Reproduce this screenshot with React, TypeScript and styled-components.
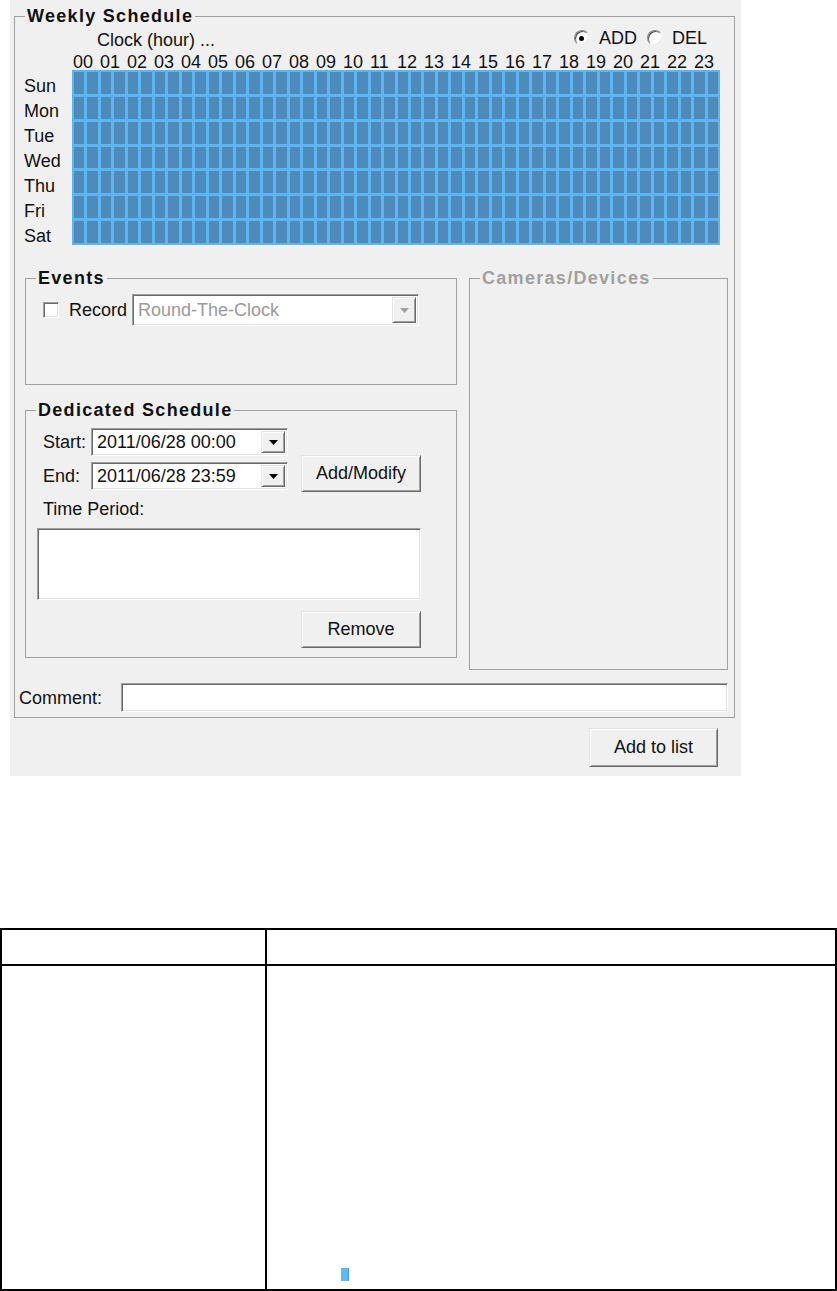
import React from 'react';
import styled, { createGlobalStyle } from 'styled-components';

const GlobalStyle = createGlobalStyle`
  html, body {
    margin: 0;
    padding: 0;
    background: #fff;
  }
  body {
    font-family: "Liberation Sans", Arial, sans-serif;
    color: #000;
  }
`;

const DAYS = ['Sun', 'Mon', 'Tue', 'Wed', 'Thu', 'Fri', 'Sat'];
const HOURS = Array.from({ length: 24 }, (_, i) => String(i).padStart(2, '0'));
const SLOTS = Array.from({ length: 7 * 48 }, (_, i) => i);

const Page = styled.div`
  width: 837px;
`;

const Panel = styled.div`
  width: 731px;
  margin-left: 10px;
  box-sizing: border-box;
  padding: 5px 0 9px;
  background: #f0f0f0;
  font-size: 18px;
  line-height: 20px;
  color: #111;
`;

const Group = styled.fieldset<{ $w: number; $h?: number; $ml?: number }>`
  box-sizing: border-box;
  min-width: 0;
  margin: 0 0 0 ${(p) => p.$ml ?? 0}px;
  padding: 0;
  width: ${(p) => p.$w}px;
  ${(p) => (p.$h ? `height: ${p.$h}px;` : '')}
  border: 1px solid #a0a0a0;
`;

const Legend = styled.legend<{ $disabled?: boolean }>`
  margin-left: 10px;
  padding: 0 2px;
  font-weight: bold;
  font-size: 18px;
  line-height: 22px;
  letter-spacing: 1.3px;
  color: ${(p) => (p.$disabled ? '#a0a0a0' : '#111')};
`;

const HeaderRow = styled.div`
  display: flex;
  justify-content: space-between;
  align-items: flex-start;
  box-sizing: border-box;
  height: 28px;
  padding: 1px 27px 0 82px;
`;

const ClockCaption = styled.span`
  margin-top: 2px;
`;

const RadioGroup = styled.div`
  display: flex;
  align-items: center;
  gap: 10px;
`;

const RadioOption = styled.label`
  display: flex;
  align-items: center;
  gap: 9px;
`;

const RadioCircle = styled.span`
  display: flex;
  align-items: center;
  justify-content: center;
  box-sizing: border-box;
  width: 16px;
  height: 16px;
  border-radius: 50%;
  background: #fff;
  border: 1px solid;
  border-color: #8a8a8a #f4f4f4 #f4f4f4 #8a8a8a;
  box-shadow: inset 1px 1px 0 #4a4a4a, inset -1px -1px 0 #e3e3e3;
`;

const RadioDot = styled.span`
  width: 5px;
  height: 5px;
  border-radius: 50%;
  background: #000;
`;

const ScheduleBody = styled.div`
  display: flex;
  align-items: flex-start;
  padding-left: 9px;
`;

const DayColumn = styled.div`
  width: 48px;
  padding-top: 19px;
  margin-bottom: -4px;
`;

const DayLabel = styled.div`
  height: 25px;
  line-height: 25px;
`;

const HourRow = styled.div`
  display: grid;
  grid-template-columns: repeat(24, 27px);
  height: 15px;
  line-height: 15px;
`;

const HourLabel = styled.span`
  padding-left: 1px;
`;

const Grid = styled.div`
  display: grid;
  grid-template-columns: repeat(48, 1fr);
  grid-template-rows: repeat(7, 1fr);
  gap: 3px;
  box-sizing: border-box;
  width: 648px;
  height: 175px;
  padding: 2px;
  background: #5cb6f4;
`;

const Slot = styled.span`
  background: #4e8aba;
`;

const LowerSection = styled.div`
  display: flex;
  gap: 12px;
  margin-top: 22px;
  padding-left: 10px;
`;

const LeftColumn = styled.div`
  display: flex;
  flex-direction: column;
  gap: 14px;
`;

const EventsRow = styled.div`
  display: flex;
  align-items: center;
  margin-top: 5px;
  padding-left: 17px;
`;

const Checkbox = styled.span`
  box-sizing: border-box;
  width: 16px;
  height: 16px;
  margin-right: 10px;
  background: #fff;
  border: 1px solid;
  border-color: #a0a0a0 #fff #fff #a0a0a0;
  box-shadow: inset 1px 1px 0 #696969, inset -1px -1px 0 #e3e3e3;
`;

const RecordLabel = styled.span`
  margin-right: 5px;
`;

const sunken = `
  box-sizing: border-box;
  background: #fff;
  border: 1px solid;
  border-color: #a0a0a0 #fff #fff #a0a0a0;
  box-shadow: inset 1px 1px 0 #696969, inset -1px -1px 0 #e3e3e3;
`;

const ComboBox = styled.div<{ $w: number; $h: number }>`
  ${sunken}
  display: flex;
  width: ${(p) => p.$w}px;
  height: ${(p) => p.$h}px;
`;

const ComboText = styled.span<{ $disabled?: boolean }>`
  flex: 1;
  display: flex;
  align-items: center;
  padding-left: 5px;
  color: ${(p) => (p.$disabled ? '#9a9a9a' : '#111')};
`;

const raised = `
  box-sizing: border-box;
  background: #f0f0f0;
  border: 1px solid;
  border-color: #e3e3e3 #696969 #696969 #e3e3e3;
  box-shadow: inset 1px 1px 0 #fff, inset -1px -1px 0 #a0a0a0;
`;

const ComboButton = styled.span`
  ${raised}
  display: flex;
  align-items: center;
  justify-content: center;
  width: 24px;
  margin: 2px 2px 2px 0;
`;

const Button = styled.button<{ $w: number; $h: number }>`
  ${raised}
  width: ${(p) => p.$w}px;
  height: ${(p) => p.$h}px;
  padding: 0;
  font-family: "Liberation Sans", Arial, sans-serif;
  font-size: 18px;
  color: #111;
`;

const DedicatedBody = styled.div`
  padding: 7px 35px 0 11px;
`;

const DateBlock = styled.div`
  display: flex;
  align-items: flex-end;
`;

const DateRows = styled.div`
  display: flex;
  flex-direction: column;
  gap: 6px;
`;

const DateRow = styled.div`
  display: flex;
  align-items: center;
  padding-left: 6px;
`;

const DateLabel = styled.span`
  width: 48px;
`;

const AddModifyButton = styled(Button)`
  margin: 0 0 -2px 13px;
`;

const TimePeriodLabel = styled.div`
  margin-top: 9px;
  padding-left: 6px;
`;

const TimePeriodBox = styled.div`
  ${sunken}
  width: 384px;
  height: 72px;
  margin-top: 9px;
`;

const RemoveRow = styled.div`
  display: flex;
  justify-content: flex-end;
  margin-top: 11px;
`;

const CommentRow = styled.div`
  display: flex;
  align-items: center;
  margin-top: 13px;
  padding: 0 6px 5px 4px;
`;

const CommentLabel = styled.span`
  width: 102px;
`;

const CommentInput = styled.div`
  ${sunken}
  flex: 1;
  height: 29px;
`;

const ButtonRow = styled.div`
  display: flex;
  justify-content: flex-end;
  margin-top: 10px;
  padding-right: 23px;
`;

const InfoTable = styled.table`
  width: 837px;
  margin-top: 152px;
  table-layout: fixed;
  border-spacing: 0;
  border: 2px solid #000;
`;

const HeadCell = styled.td<{ $first?: boolean }>`
  height: 34px;
  padding: 0;
  border-bottom: 2px solid #000;
  ${(p) => (p.$first ? 'width: 263px; border-right: 2px solid #000;' : '')}
`;

const BodyCell = styled.td<{ $first?: boolean }>`
  height: 323px;
  padding: 0 0 8px 74px;
  vertical-align: bottom;
  box-sizing: border-box;
  ${(p) => (p.$first ? 'border-right: 2px solid #000; padding: 0;' : '')}
`;

const BlueMark = styled.span`
  display: block;
  width: 7px;
  height: 13px;
  background: #62b8f7;
  border-right: 1px solid #3f9ee6;
`;

function Arrow({ color }: { color: string }) {
  return (
    <svg width="9" height="5" viewBox="0 0 9 5">
      <polygon points="0,0 9,0 4.5,5" fill={color} />
    </svg>
  );
}

function Combo(props: { w: number; h: number; value: string; disabled?: boolean }) {
  const { w, h, value, disabled } = props;
  return (
    <ComboBox $w={w} $h={h}>
      <ComboText $disabled={disabled}>{value}</ComboText>
      <ComboButton>
        <Arrow color={disabled ? '#a0a0a0' : '#000'} />
      </ComboButton>
    </ComboBox>
  );
}

function Radio(props: { label: string; checked?: boolean }) {
  return (
    <RadioOption>
      <RadioCircle>{props.checked && <RadioDot />}</RadioCircle>
      {props.label}
    </RadioOption>
  );
}

export default function App() {
  return (
    <Page>
      <GlobalStyle />
      <Panel>
        <Group $w={721} $ml={4}>
          <Legend>Weekly Schedule</Legend>
          <HeaderRow>
            <ClockCaption>Clock (hour) ...</ClockCaption>
            <RadioGroup>
              <Radio label="ADD" checked />
              <Radio label="DEL" />
            </RadioGroup>
          </HeaderRow>
          <ScheduleBody>
            <DayColumn>
              {DAYS.map((d) => (
                <DayLabel key={d}>{d}</DayLabel>
              ))}
            </DayColumn>
            <div>
              <HourRow>
                {HOURS.map((h) => (
                  <HourLabel key={h}>{h}</HourLabel>
                ))}
              </HourRow>
              <Grid>
                {SLOTS.map((s) => (
                  <Slot key={s} />
                ))}
              </Grid>
            </div>
          </ScheduleBody>

          <LowerSection>
            <LeftColumn>
              <Group $w={432} $h={118}>
                <Legend>Events</Legend>
                <EventsRow>
                  <Checkbox />
                  <RecordLabel>Record</RecordLabel>
                  <Combo w={287} h={32} value="Round-The-Clock" disabled />
                </EventsRow>
              </Group>
              <Group $w={432} $h={259}>
                <Legend>Dedicated Schedule</Legend>
                <DedicatedBody>
                  <DateBlock>
                    <DateRows>
                      <DateRow>
                        <DateLabel>Start:</DateLabel>
                        <Combo w={197} h={28} value="2011/06/28 00:00" />
                      </DateRow>
                      <DateRow>
                        <DateLabel>End:</DateLabel>
                        <Combo w={197} h={28} value="2011/06/28 23:59" />
                      </DateRow>
                    </DateRows>
                    <AddModifyButton $w={120} $h={37}>Add/Modify</AddModifyButton>
                  </DateBlock>
                  <TimePeriodLabel>Time Period:</TimePeriodLabel>
                  <TimePeriodBox />
                  <RemoveRow>
                    <Button $w={120} $h={37}>Remove</Button>
                  </RemoveRow>
                </DedicatedBody>
              </Group>
            </LeftColumn>
            <Group $w={259} $h={403}>
              <Legend $disabled>Cameras/Devices</Legend>
            </Group>
          </LowerSection>

          <CommentRow>
            <CommentLabel>Comment:</CommentLabel>
            <CommentInput />
          </CommentRow>
        </Group>
        <ButtonRow>
          <Button $w={129} $h={39}>Add to list</Button>
        </ButtonRow>
      </Panel>

      <InfoTable>
        <tbody>
          <tr>
            <HeadCell $first />
            <HeadCell />
          </tr>
          <tr>
            <BodyCell $first />
            <BodyCell>
              <BlueMark />
            </BodyCell>
          </tr>
        </tbody>
      </InfoTable>
    </Page>
  );
}
